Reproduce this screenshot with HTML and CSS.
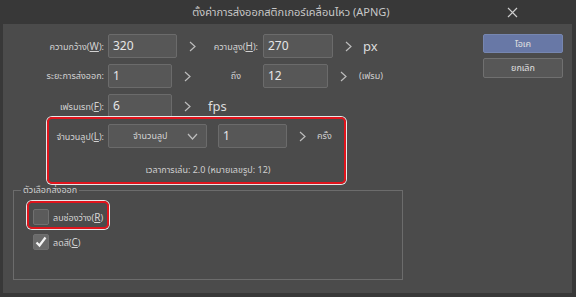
FILE: index.html
```html
<!DOCTYPE html>
<html>
<head>
<meta charset="utf-8">
<link rel="stylesheet" href="styles.css">
</head>
<body>
<div class="window">
  <div class="titlebar">
    <span class="title">ตั้งค่าการส่งออกสติกเกอร์เคลื่อนไหว (APNG)</span>
    <svg class="close" width="11" height="11" viewBox="0 0 11 11"><path d="M1 1L10 10M10 1L1 10" stroke="#cfcfcf" stroke-width="1.2" fill="none"/></svg>
  </div>
  <div class="panel">
    <div class="form">
      <div class="row">
        <div class="lbl lbl1">ความกว้าง(<u>W</u>):</div>
        <div class="cell">
          <div class="input w69">320</div>
          <svg class="chev" width="7" height="11" viewBox="0 0 7 11"><path d="M1 1L6 5.5L1 10" stroke="#bdbdbd" stroke-width="1.2" fill="none"/></svg>
        </div>
        <div class="lbl lbl2">ความสูง(<u>H</u>):</div>
        <div class="cell">
          <div class="input w70">270</div>
          <svg class="chev" width="7" height="11" viewBox="0 0 7 11"><path d="M1 1L6 5.5L1 10" stroke="#bdbdbd" stroke-width="1.2" fill="none"/></svg>
          <span class="unit big">px</span>
        </div>
      </div>
      <div class="row">
        <div class="lbl lbl1">ระยะการส่งออก:</div>
        <div class="cell">
          <div class="input w64">1</div>
          <svg class="chev" width="7" height="11" viewBox="0 0 7 11"><path d="M1 1L6 5.5L1 10" stroke="#bdbdbd" stroke-width="1.2" fill="none"/></svg>
        </div>
        <div class="lbl lbl2 to">ถึง</div>
        <div class="cell">
          <div class="input w65">12</div>
          <svg class="chev" width="7" height="11" viewBox="0 0 7 11"><path d="M1 1L6 5.5L1 10" stroke="#bdbdbd" stroke-width="1.2" fill="none"/></svg>
          <span class="unit">(เฟรม)</span>
        </div>
      </div>
      <div class="row">
        <div class="lbl lbl1">เฟรมเรท(<u>F</u>):</div>
        <div class="cell">
          <div class="input w64">6</div>
          <svg class="chev" width="7" height="11" viewBox="0 0 7 11"><path d="M1 1L6 5.5L1 10" stroke="#bdbdbd" stroke-width="1.2" fill="none"/></svg>
          <span class="unit big fps">fps</span>
        </div>
      </div>
      <div class="loop">
        <div class="row">
          <div class="lbl lbl1">จำนวนลูป(<u>L</u>):</div>
          <div class="select">
            <span>จำนวนลูป</span>
            <svg class="selchev" width="11" height="7" viewBox="0 0 11 7"><path d="M1 1L5.5 6L10 1" stroke="#bdbdbd" stroke-width="1.2" fill="none"/></svg>
          </div>
          <div class="cell loopcell">
            <div class="input w69">1</div>
            <svg class="chev" width="7" height="11" viewBox="0 0 7 11"><path d="M1 1L6 5.5L1 10" stroke="#bdbdbd" stroke-width="1.2" fill="none"/></svg>
            <span class="unit times">ครั้ง</span>
          </div>
        </div>
        <div class="playtime">เวลาการเล่น: 2.0 (หมายเลขรูป: 12)</div>
        <div class="mark mark-loop"></div>
      </div>
      <fieldset class="group">
        <legend>ตัวเลือกส่งออก</legend>
        <div class="check">
          <span class="box"></span>
          <span class="clabel">ลบช่องว่าง(<u>R</u>)</span>
          <div class="mark mark-check"></div>
        </div>
        <div class="check">
          <span class="box checked"><svg width="14" height="14" viewBox="0 0 14 14"><path d="M2.5 7.5L5.5 10.5L11.5 2.5" stroke="#f4f4f4" stroke-width="2.2" fill="none"/></svg></span>
          <span class="clabel">ลดสี(<u>C</u>)</span>
        </div>
      </fieldset>
    </div>
    <div class="buttons">
      <div class="btn ok">โอเค</div>
      <div class="btn">ยกเลิก</div>
    </div>
  </div>
</div>
</body>
</html>
```
FILE: styles.css
```css
html, body {
  margin: 0;
  padding: 0;
}
body {
  background: #383838;
  width: 576px;
  height: 297px;
  overflow: hidden;
  font-family: "Noto Sans", "Noto Sans Thai", "Loma", "Garuda", "DejaVu Sans", sans-serif;
  color: #d8d8d8;
}
.window {
  display: flex;
  flex-direction: column;
  height: 297px;
}
.titlebar {
  height: 24px;
  position: relative;
  display: flex;
  align-items: center;
  justify-content: center;
}
.title {
  font-size: 11px;
  color: #c8c8c8;
  margin-left: 6px;
}
.close {
  position: absolute;
  left: 507px;
  top: 7px;
}
.panel {
  margin: 0 4px 4px 3px;
  height: 269px;
  background: #4b4b4b;
  display: flex;
  padding: 10px 9px 0 0;
  box-sizing: border-box;
}
.form {
  flex: 1;
}
.row {
  display: flex;
  align-items: center;
  height: 24px;
  margin-bottom: 6px;
}
.lbl {
  font-size: 9px;
  color: #d2d2d2;
  text-align: right;
  white-space: nowrap;
  flex: none;
}
.lbl u, .clabel u {
  text-decoration: underline;
  font-size: 10px;
}
.lbl1 {
  width: 101px;
  margin-right: 4px;
}
.lbl2 {
  width: 51px;
  margin-right: 5px;
}
.lbl2.to {
  width: 34px;
  margin-right: 22px;
}
.cell {
  display: flex;
  align-items: center;
  width: 99px;
  flex: none;
}
.input {
  height: 24px;
  box-sizing: border-box;
  background: #575757;
  border: 1px solid #6b6b6b;
  border-radius: 2px;
  font-size: 12px;
  color: #e6e6e6;
  padding: 2px 0 0 4px;
  line-height: 17px;
  flex: none;
}
.w64 { width: 64px; }
.w65 { width: 65px; }
.w69 { width: 69px; }
.w70 { width: 70px; }
.chev {
  margin-left: 12px;
  flex: none;
}
.unit {
  margin-left: 12px;
  font-size: 9px;
  color: #d0d0d0;
  white-space: nowrap;
}
.unit.big {
  font-size: 13px;
  margin-left: 11px;
  color: #dcdcdc;
}
.unit.fps {
  margin-left: 17px;
}
.loop {
  position: relative;
}
.select {
  width: 99px;
  height: 24px;
  box-sizing: border-box;
  background: #575757;
  border: 1px solid #6b6b6b;
  border-radius: 2px;
  display: flex;
  align-items: center;
  font-size: 9px;
  color: #d4d4d4;
  padding-left: 24px;
  position: relative;
  margin-right: 11px;
  flex: none;
}
.selchev {
  position: absolute;
  right: 8px;
  top: 8px;
}
.loopcell {
  width: auto;
}
.unit.times {
  margin-left: 11px;
}
.playtime {
  font-size: 9px;
  color: #cfcfcf;
  width: 410px;
  text-align: center;
  margin-top: 15px;
  height: 13px;
  line-height: 13px;
}
.mark {
  position: absolute;
  box-sizing: border-box;
  border: 2px solid #e0141c;
  border-radius: 5px;
  box-shadow: 0 0 0 1px #e8e8e8;
}
.mark-loop {
  left: 44px;
  top: -7px;
  width: 299px;
  height: 67px;
}
.group {
  margin: 7px 0 0 10px;
  width: 390px;
  height: 97px;
  box-sizing: border-box;
  border: 1px solid #6c6c6c;
  padding: 12px 0 0 19px;
}
.group legend {
  font-size: 9px;
  line-height: 14px;
  color: #cfcfcf;
  padding: 0 2px;
  margin-left: -12px;
}
.check {
  position: relative;
  display: flex;
  align-items: center;
  height: 16px;
  margin-bottom: 9px;
  width: 80px;
}
.box {
  width: 16px;
  height: 16px;
  box-sizing: border-box;
  background: #5b5b5b;
  border: 1px solid #707070;
  border-radius: 2px;
  margin-right: 4px;
  display: flex;
  flex: none;
}
.box.checked {
  background: #6a6a6a;
}
.clabel {
  font-size: 9px;
  color: #d4d4d4;
  white-space: nowrap;
}
.mark-check {
  left: -6px;
  top: -8px;
  width: 82px;
  height: 28px;
}
.buttons {
  width: 80px;
  display: flex;
  flex-direction: column;
  gap: 5px;
}
.btn {
  height: 20px;
  box-sizing: border-box;
  border: 1px solid #707070;
  background: #575757;
  border-radius: 2px;
  font-size: 9px;
  color: #e0e0e0;
  display: flex;
  align-items: center;
  justify-content: center;
}
.btn.ok {
  background: #6878a6;
  border-color: #7686b0;
  height: 19px;
}
```
